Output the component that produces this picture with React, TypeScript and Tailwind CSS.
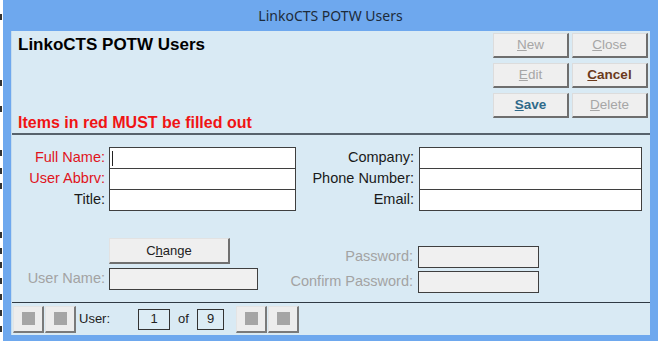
import React from 'react';

type Tone = 'off' | 'cancel' | 'save';

const Hot = ({ text, at }: { text: string; at: number }) => (
  <span>
    {text.slice(0, at)}
    <u>{text[at]}</u>
    {text.slice(at + 1)}
  </span>
);

const ToolButton = ({ label, at, tone = 'off' }: { label: string; at: number; tone?: Tone }) => {
  const color =
    tone === 'cancel'
      ? 'text-[#6b3a1c] font-bold'
      : tone === 'save'
        ? 'text-[#2f6a8a] font-bold'
        : 'text-[#a6a6a6]';
  return (
    <div
      className={`flex h-[25px] w-[76px] items-center justify-center border border-b-2 border-r-2 border-t-[#dcdcdc] border-l-[#dcdcdc] border-r-[#6e6e6e] border-b-[#6e6e6e] bg-[#efefef] text-[13.5px] ${color}`}>
      <Hot text={label} at={at} />
    </div>
  );
};

const NavButton = () => (
  <div className="flex h-[27px] w-[31px] items-center justify-center border border-b-2 border-r-2 border-t-[#e4e4e4] border-l-[#e4e4e4] border-r-[#7a7a7a] border-b-[#7a7a7a] bg-[#ededed]">
    <div className="h-[13px] w-[13px] bg-[#a5a5a5]" />
  </div>
);

const labels = ['Full Name:', 'User Abbrv:', 'Title:'];
const rightLabels = ['Company:', 'Phone Number:', 'Email:'];

// marks of the document that shows behind the window's left edge
const behind = [14, 80, 106, 150, 168, 183, 232, 248, 262, 278, 294, 310, 326];

const InputStack = ({ width, caret }: { width: string; caret?: boolean }) => (
  <div className={`flex flex-col ${width}`}>
    {[0, 1, 2].map((i) => (
      <div
        key={i}
        className={`flex h-[21px] items-center border border-[#3f3f3f] bg-white pl-[2px] ${i < 2 ? 'border-b-0' : 'h-[22px]'}`}>
        {caret && i === 0 && <div className="h-[15px] w-px bg-[#222]" />}
      </div>
    ))}
  </div>
);

export default function App() {
  return (
    <div className="flex h-[341px] w-[658px] overflow-hidden bg-white font-['Liberation_Sans',Arial,sans-serif]">
      <div className="flex w-[3px] flex-col">
        {behind.map((y, i) => (
          <div
            key={y}
            className="h-[6px] w-[2px] bg-[#333]"
            style={{ marginTop: i === 0 ? y : y - behind[i - 1] - 6 }}
          />
        ))}
      </div>

      <div className="flex flex-1 flex-col bg-[#6ea8ee] px-[8px] pb-[6px]">
        <div className="flex h-[31px] items-center justify-center font-['Noto_Sans',sans-serif] text-[14px] text-[#1d2b3a]">
          LinkoCTS POTW Users
        </div>

        <div className="flex flex-1 flex-col border-l border-[#c4dcef] bg-[#d9eaf4]">
          {/* header */}
          <div className="flex h-[102px]">
            <div className="flex flex-1 flex-col pl-[6px]">
              <div className="pt-[4px] text-[17px] font-bold leading-[20px] text-black">LinkoCTS POTW Users</div>
              <div className="mt-[58px] text-[16px] font-bold leading-[20px] text-[#f01414]">
                Items in red MUST be filled out
              </div>
            </div>
            <div className="mr-[2px] mt-[2px] grid h-fit grid-cols-2 gap-x-[3px] gap-y-[5px]">
              <ToolButton label="New" at={0} />
              <ToolButton label="Close" at={0} />
              <ToolButton label="Edit" at={0} />
              <ToolButton label="Cancel" at={0} tone="cancel" />
              <ToolButton label="Save" at={0} tone="save" />
              <ToolButton label="Delete" at={0} />
            </div>
          </div>
          <div className="h-[2px] bg-[#57626c]" />

          {/* form */}
          <div className="flex h-[167px] flex-col pt-[12px] text-[14.5px]">
            <div className="flex">
              <div className="flex w-[285px] gap-[4px]">
                <div className="flex w-[93px] flex-col items-end">
                  {labels.map((l, i) => (
                    <div key={l} className={`flex h-[21px] items-center whitespace-nowrap ${i < 2 ? 'text-[#e0141c]' : 'text-[#1a1a1a]'}`}>
                      {l}
                    </div>
                  ))}
                </div>
                <InputStack width="w-[187px]" caret />
              </div>
              <div className="flex gap-[5px]">
                <div className="flex w-[117px] flex-col items-end text-[#1a1a1a]">
                  {rightLabels.map((l) => (
                    <div key={l} className="flex h-[21px] items-center whitespace-nowrap">
                      {l}
                    </div>
                  ))}
                </div>
                <InputStack width="w-[223px]" />
              </div>
            </div>

            <div className="flex">
              <div className="flex w-[285px] flex-col pt-[27px]">
                <div className="ml-[97px] flex h-[26px] w-[121px] items-center justify-center border border-b-2 border-r-2 border-t-[#e2e2e2] border-l-[#e2e2e2] border-r-[#707070] border-b-[#707070] bg-[#efefef] text-[13px] text-[#222]">
                  <Hot text="Change" at={1} />
                </div>
                <div className="mt-[4px] flex gap-[4px]">
                  <div className="flex h-[22px] w-[93px] items-center justify-end whitespace-nowrap text-[#a3a3a3]">User Name:</div>
                  <div className="h-[22px] w-[149px] border border-[#3f3f3f] bg-[#f0f0f0]" />
                </div>
              </div>
              <div className="flex flex-col gap-[3px] pt-[35px]">
                {['Password:', 'Confirm Password:'].map((l) => (
                  <div key={l} className="flex gap-[5px]">
                    <div className="flex h-[22px] w-[116px] items-center justify-end whitespace-nowrap text-[#a3a3a3]">{l}</div>
                    <div className="h-[22px] w-[121px] border border-[#3f3f3f] bg-[#f0f0f0]" />
                  </div>
                ))}
              </div>
            </div>
          </div>
          <div className="h-px bg-[#2f3a44]" />

          {/* record navigator */}
          <div className="flex h-[32px] items-center gap-[1px] pl-px text-[13px] text-[#222]">
            <NavButton />
            <NavButton />
            <span className="ml-[2px] w-[58px]">User:</span>
            <div className="flex h-[21px] w-[32px] items-center justify-center border border-[#333] bg-[#dcecf5]">1</div>
            <span className="ml-[7px] w-[18px]">of</span>
            <div className="flex h-[21px] w-[27px] items-center justify-center border border-[#333] bg-[#dcecf5]">9</div>
            <div className="ml-[11px] flex gap-[1px]">
              <NavButton />
              <NavButton />
            </div>
          </div>
        </div>
      </div>
    </div>
  );
}
